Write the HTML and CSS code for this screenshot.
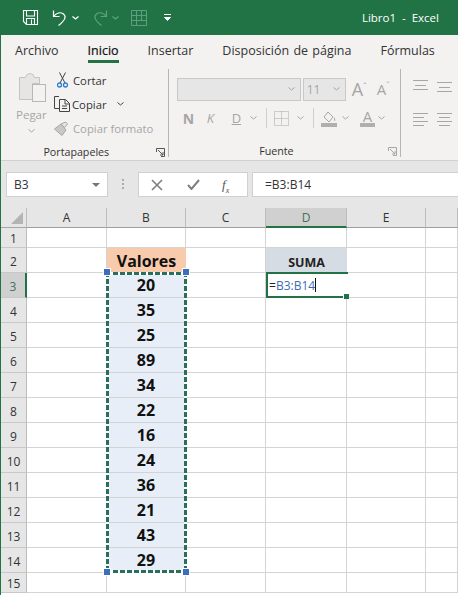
FILE: index.html
```html
<!DOCTYPE html>
<html lang="es">
<head>
<meta charset="utf-8">
<title>Libro1 - Excel</title>
<link rel="stylesheet" href="styles.css">
</head>
<body>
<div class="app">
  <header class="titlebar">
    <svg class="qa qa-save" width="17" height="17" viewBox="0 0 17 17"><path d="M1.500 1.500h14v14h-11l-3-3z M4.500 1.500v5.500h8v-5.500 M4.500 15.500v-6h8v6 M9.500 10.500v4.500" fill="none" stroke="#fff" stroke-width="1.100"/></svg>
    <svg class="qa qa-undo" width="16" height="18" viewBox="0 0 16 18"><path d="M1.500 1.500v6h6 M1.500 7.500c3-4 7-4.500 10-2.500 3 2.500 2 6-5 11.500" fill="none" stroke="#fff" stroke-width="1.200"/></svg>
    <svg class="chev" width="7" height="4" viewBox="0 0 7 4"><path d="M.5.500 3.500 3l3-2.500" fill="none" stroke="#fff" stroke-width="1.300"/></svg>
    <svg class="qa qa-redo" width="16" height="18" viewBox="0 0 16 18"><path d="M14.500 1.500v6h-6 M14.500 7.500c-3-4-7-4.500-10-2.500-3 2.500-2 6 5 11.500" fill="none" stroke="#5f9f7f" stroke-width="1.200"/></svg>
    <svg class="chev chev-dim" width="7" height="4" viewBox="0 0 7 4"><path d="M.5.500 3.500 3l3-2.500" fill="none" stroke="#5f9f7f" stroke-width="1.300"/></svg>
    <svg class="qa qa-grid" width="16" height="16" viewBox="0 0 16 16"><path d="M.5.500h15v15H.5z M.5 5.500h15 M.5 10.500h15 M5.500.500v15 M10.500.500v10" fill="none" stroke="#5f9f7f"/></svg>
    <svg class="qa qa-more" width="7" height="7" viewBox="0 0 7 7"><path d="M0 .5h7 M.5 3.500h6L3.500 6.500z" fill="#fff" stroke="#fff" stroke-width="1"/></svg>
    <span class="doc-title">Libro1&nbsp; -&nbsp; Excel</span>
  </header>

  <nav class="tabs">
    <span class="tab">Archivo</span>
    <span class="tab tab-active">Inicio</span>
    <span class="tab">Insertar</span>
    <span class="tab">Disposición de página</span>
    <span class="tab">Fórmulas</span>
  </nav>

  <section class="ribbon">
    <div class="group group-clip">
      <div class="clip-body">
        <div class="paste">
          <svg width="28" height="30" viewBox="0 0 28 30"><path d="M.5 4.500h6l1.500-3 3-1 3 1 1.500 3h5v6h-7v16H.5z" fill="#e6e5e4" stroke="#c4c3c2"/><rect x="13.500" y="11.500" width="13" height="17" fill="#f3f2f1" stroke="#b8b7b6"/></svg>
          <span class="paste-label">Pegar</span>
          <svg class="paste-chev" width="7" height="4" viewBox="0 0 7 4"><path d="M.5.500 3.500 3l3-2.500" fill="none" stroke="#a6a6a6"/></svg>
        </div>
        <div class="clip-actions">
          <div class="clip-row">
            <svg width="11" height="16" viewBox="0 0 11 16"><path d="M2.500.5 8 11 M8.500.5 3 11" fill="none" stroke="#444"/><circle cx="2.500" cy="13" r="2" fill="none" stroke="#2b7cd3" stroke-width="1.300"/><circle cx="8.500" cy="13" r="2" fill="none" stroke="#2b7cd3" stroke-width="1.300"/></svg>
            <span>Cortar</span>
          </div>
          <div class="clip-row clip-row-copy">
            <svg width="16" height="16" viewBox="0 0 16 16"><path d="M5 .5H.5v12H5 M5.500 3.500h6l4 4v8h-10z M11 3.500v4.500h4.500 M8 10h5 M8 12.500h5" fill="none" stroke="#444"/></svg>
            <span>Copiar</span>
            <svg class="copy-chev" width="7" height="4" viewBox="0 0 7 4"><path d="M.5.500 3.500 3l3-2.500" fill="none" stroke="#444"/></svg>
          </div>
          <div class="clip-row clip-row-dim">
            <svg width="16" height="15" viewBox="0 0 16 15"><path d="M.5 8 7 3l5 6-4 5.500z" fill="#c9c8c7" stroke="#a6a6a6"/><path d="M7 3l3.500 3.500 3-3.500L11.500 1z" fill="#e6e5e4" stroke="#a6a6a6"/></svg>
            <span>Copiar formato</span>
          </div>
        </div>
      </div>
      <div class="group-foot"><span class="group-name">Portapapeles</span>
        <svg class="launcher" width="9" height="9" viewBox="0 0 9 9"><path d="M.5 4V.5H8.500V8.500H5 M2 2l5 5 M7 4v3H4" fill="none" stroke="#555"/></svg>
      </div>
    </div>

    <div class="group group-font">
      <div class="font-rows">
        <div class="font-row-top">
          <div class="combo combo-font"><svg width="7" height="4" viewBox="0 0 7 4"><path d="M.5.500 3.500 3l3-2.500" fill="none" stroke="#a6a6a6"/></svg></div>
          <div class="combo combo-size"><span>11</span><svg width="7" height="4" viewBox="0 0 7 4"><path d="M.5.500 3.500 3l3-2.500" fill="none" stroke="#a6a6a6"/></svg></div>
          <span class="grow-a">A<sup>ˆ</sup></span>
          <span class="shrink-a">A<sup>ˇ</sup></span>
        </div>
        <div class="font-row-bot">
          <span class="fmt fmt-n">N</span>
          <span class="fmt fmt-k">K</span>
          <span class="fmt fmt-d">D</span>
          <svg class="dimchev" width="7" height="4" viewBox="0 0 7 4"><path d="M.5.500 3.500 3l3-2.500" fill="none" stroke="#a6a6a6"/></svg>
          <span class="vsep"></span>
          <svg class="borders" width="15" height="15" viewBox="0 0 15 15"><path d="M.5.500h14v14H.5z M7.500.5v14 M.5 7.500h14" fill="none" stroke="#a6a6a6" stroke-dasharray="1 1"/></svg>
          <svg class="dimchev" width="7" height="4" viewBox="0 0 7 4"><path d="M.5.500 3.500 3l3-2.500" fill="none" stroke="#a6a6a6"/></svg>
          <span class="vsep"></span>
          <svg class="fill" width="16" height="17" viewBox="0 0 16 17"><path d="M3 7l4-5 5 5-4 5z" fill="#f3f2f1" stroke="#a6a6a6"/><path d="M13 7c1 2 2 3 1 4-1 0-1-2-1-4z" fill="#a6a6a6"/><rect y="13" width="16" height="4" fill="#b0afae"/></svg>
          <svg class="dimchev" width="7" height="4" viewBox="0 0 7 4"><path d="M.5.500 3.500 3l3-2.500" fill="none" stroke="#a6a6a6"/></svg>
          <span class="color-a">A</span>
          <svg class="dimchev" width="7" height="4" viewBox="0 0 7 4"><path d="M.5.500 3.500 3l3-2.500" fill="none" stroke="#a6a6a6"/></svg>
        </div>
      </div>
      <div class="group-foot"><span class="group-name">Fuente</span>
        <svg class="launcher" width="9" height="9" viewBox="0 0 9 9"><path d="M.5 4V.5H8.500V8.500H5 M2 2l5 5 M7 4v3H4" fill="none" stroke="#a6a6a6"/></svg>
      </div>
    </div>

    <div class="group-align">
      <svg width="15" height="11" viewBox="0 0 15 11"><path d="M0 .5h15 M2 5.500h11 M0 9.500h15" stroke="#a6a6a6" fill="none"/></svg>
      <svg class="align-low" width="15" height="11" viewBox="0 0 15 11"><path d="M0 .5h15 M2 5.500h11 M0 9.500h15" stroke="#a6a6a6" fill="none"/></svg>
      <svg width="15" height="13" viewBox="0 0 15 13"><path d="M0 .5h15 M0 4.500h11 M0 8.500h15 M0 12.500h11" stroke="#a6a6a6" fill="none"/></svg>
      <svg width="15" height="13" viewBox="0 0 15 13"><path d="M0 .5h15 M2 4.500h11 M0 8.500h15 M2 12.500h11" stroke="#a6a6a6" fill="none"/></svg>
    </div>
  </section>

  <section class="formula-zone">
    <div class="namebox"><span>B3</span><span class="tri"></span></div>
    <span class="dots"></span>
    <div class="fx-buttons">
      <svg width="12" height="12" viewBox="0 0 12 12"><path d="M1 1l10 10 M11 1 1 11" stroke="#7f7f7f" stroke-width="1.600" fill="none"/></svg>
      <svg width="13" height="11" viewBox="0 0 13 11"><path d="M1 6l3.500 4L12 1" stroke="#7f7f7f" stroke-width="2" fill="none"/></svg>
      <span class="fx">f<sub>x</sub></span>
    </div>
    <div class="formula-input">=B3:B14</div>
  </section>

  <section class="sheet">
    <div class="grid">
      <div class="corner"><span class="corner-tri"></span></div>
      <div class="ch">A</div><div class="ch">B</div><div class="ch">C</div><div class="ch ch-on">D</div><div class="ch">E</div><div class="ch"></div>

      <div class="rh r-short">1</div><div class="c"></div><div class="c"></div><div class="c"></div><div class="c"></div><div class="c"></div><div class="c"></div>
      <div class="rh">2</div><div class="c"></div><div class="c c-head">Valores</div><div class="c"></div><div class="c c-suma">SUMA</div><div class="c"></div><div class="c"></div>
      <div class="rh rh-on">3</div><div class="c"></div><div class="c c-val">20</div><div class="c"></div><div class="c c-edit">=<span class="ref">B3:B14</span><span class="caret"></span><span class="fill-handle"></span></div><div class="c"></div><div class="c"></div>
      <div class="rh">4</div><div class="c"></div><div class="c c-val">35</div><div class="c"></div><div class="c"></div><div class="c"></div><div class="c"></div>
      <div class="rh">5</div><div class="c"></div><div class="c c-val">25</div><div class="c"></div><div class="c"></div><div class="c"></div><div class="c"></div>
      <div class="rh">6</div><div class="c"></div><div class="c c-val">89</div><div class="c"></div><div class="c"></div><div class="c"></div><div class="c"></div>
      <div class="rh">7</div><div class="c"></div><div class="c c-val">34</div><div class="c"></div><div class="c"></div><div class="c"></div><div class="c"></div>
      <div class="rh">8</div><div class="c"></div><div class="c c-val">22</div><div class="c"></div><div class="c"></div><div class="c"></div><div class="c"></div>
      <div class="rh">9</div><div class="c"></div><div class="c c-val">16</div><div class="c"></div><div class="c"></div><div class="c"></div><div class="c"></div>
      <div class="rh">10</div><div class="c"></div><div class="c c-val">24</div><div class="c"></div><div class="c"></div><div class="c"></div><div class="c"></div>
      <div class="rh">11</div><div class="c"></div><div class="c c-val">36</div><div class="c"></div><div class="c"></div><div class="c"></div><div class="c"></div>
      <div class="rh">12</div><div class="c"></div><div class="c c-val">21</div><div class="c"></div><div class="c"></div><div class="c"></div><div class="c"></div>
      <div class="rh">13</div><div class="c"></div><div class="c c-val">43</div><div class="c"></div><div class="c"></div><div class="c"></div><div class="c"></div>
      <div class="rh">14</div><div class="c"></div><div class="c c-val">29</div><div class="c"></div><div class="c"></div><div class="c"></div><div class="c"></div>
      <div class="rh r-short">15</div><div class="c"></div><div class="c"></div><div class="c"></div><div class="c"></div><div class="c"></div><div class="c"></div>
    </div>
    <div class="ants">
      <span class="hd hd-tl"></span><span class="hd hd-tr"></span><span class="hd hd-bl"></span><span class="hd hd-br"></span>
    </div>
  </section>
</div>
</body>
</html>
```

FILE: styles.css
```css
* { box-sizing: border-box; }
html, body { margin: 0; padding: 0; }
body { width: 458px; height: 595px; overflow: hidden; background: #fff; font-family: "Open Sans", "Noto Sans", sans-serif; color: #333; }
.app { width: 458px; height: 595px; display: flex; flex-direction: column; border-left: 1px solid #217346; overflow: hidden; }

/* Title bar */
.titlebar { height: 35px; flex: none; background: #217346; display: flex; align-items: center; padding-left: 22px; margin-left: -1px; }
.titlebar svg { display: block; flex: none; }
.qa-save { margin-right: 13px; }
.qa-undo { margin-right: 4px; }
.titlebar .chev { margin-right: 13px; }
.titlebar .chev-dim { margin-left: 4px; margin-right: 12px; }
.qa-grid { margin-right: 17px; }
.doc-title { margin-left: auto; margin-right: 19px; color: #fff; font-size: 11.500px; }

/* Tabs */
.tabs { height: 34px; flex: none; background: #f3f2f1; display: flex; align-items: flex-start; padding-top: 7px; padding-left: 14px; font-size: 12.500px; word-spacing: 1px; color: #333; }
.tab { margin-right: 29px; position: relative; white-space: nowrap; }
.tab-active { color: #111; -webkit-text-stroke: .2px #111; }
.tab-active::after { content: ""; position: absolute; left: 0; right: 0; bottom: -4px; height: 3px; background: #217346; }

/* Ribbon */
.ribbon { height: 92px; flex: none; background: #f3f2f1; border-bottom: 1px solid #d2d0ce; display: flex; }
.group { display: flex; flex-direction: column; border-right: 1px solid #b6b5b4; margin-bottom: 3px; }
.group-clip { width: 168px; }
.group-font { width: 233px; }
.clip-body { flex: 1; display: flex; padding-left: 18px; padding-top: 4px; }
.paste { width: 36px; margin-left: -4px; display: flex; flex-direction: column; align-items: flex-start; color: #a6a6a6; }
.paste svg { margin-left: 4px; }
.paste-label { margin-top: 5px; line-height: 14px; font-size: 11.500px; margin-left: 1px; }
.paste .paste-chev { margin: 7px 0 0 13px; }
.clip-actions { display: flex; flex-direction: column; padding-left: 3px; margin-top: -5px; }
.clip-row { height: 24px; flex: none; display: flex; align-items: center; font-size: 11.300px; color: #333; gap: 5px; padding-left: 3px; }
.clip-row-copy { gap: 2px; padding-left: 0; }
.clip-row-dim { color: #a6a6a6; gap: 3px; padding-left: 0; }
.copy-chev { margin-left: 8px; }
.group-foot { height: 18px; flex: none; display: flex; align-items: center; justify-content: center; position: relative; font-size: 10.700px; color: #333; padding-right: 16px; padding-top: 6px; }
.launcher { position: absolute; right: 3px; bottom: 1px; }
.font-rows { flex: 1; padding: 8px 0 0 8px; }
.font-row-top { display: flex; align-items: center; height: 24px; }
.combo { height: 23px; background: #e6e6e6; border: 1px solid #c8c8c8; display: flex; align-items: center; justify-content: flex-end; padding-right: 5px; }
.combo-font { width: 124px; margin-right: 2px; }
.combo-size { width: 43px; justify-content: space-between; padding-left: 3px; margin-right: 6px; color: #a6a6a6; font-size: 12px; }
.grow-a, .shrink-a { color: #a6a6a6; line-height: 20px; }
.grow-a { margin-right: 10px; font-size: 18px; }
.shrink-a { font-size: 15px; }
.grow-a sup, .shrink-a sup { font-size: 9px; vertical-align: 6px; line-height: 0; }
.font-row-bot { display: flex; align-items: center; height: 24px; margin-top: 5px; color: #a6a6a6; padding-left: 6px; }
.fmt { font-size: 13px; }
.fmt-n { font-weight: 700; font-size: 14px; width: 24px; }
.fmt-k { font-style: italic; width: 25px; }
.fmt-d { text-decoration: underline; width: 16px; }
.dimchev { flex: none; margin: 0 9px 0 2px; }
.vsep { width: 1px; height: 20px; background: #d2d0ce; margin: 0 7px 0 0; }
.borders { margin-right: 6px; }
.fill { margin: 0 3px 0 0; }
.color-a { font-size: 15px; line-height: 13px; border-bottom: 4px solid #b0afae; padding: 0 3px; margin: 0 1px 0 2px; }
.group-align { width: 57px; padding: 11px 0 0 12px; display: grid; grid-template-columns: 15px 15px; column-gap: 9px; row-gap: 20px; align-content: start; }
.align-low { margin-top: 2px; }

/* Formula bar */
.formula-zone { height: 47px; flex: none; background: #e6e6e6; display: flex; align-items: flex-start; padding-top: 11px; padding-left: 5px; }
.namebox { width: 102px; height: 25px; background: #fff; border: 1px solid #d0d0d0; display: flex; align-items: center; justify-content: space-between; padding: 0 7px 0 7px; font-size: 12px; color: #333; }
.tri { width: 0; height: 0; border-left: 4px solid transparent; border-right: 4px solid transparent; border-top: 4px solid #777; }
.dots { width: 2px; height: 10px; margin: 7px 14px 0 14px; background: repeating-linear-gradient(#aaa 0 2px, transparent 2px 4px); }
.fx-buttons { width: 110px; height: 25px; background: #fff; border: 1px solid #d0d0d0; display: flex; align-items: center; padding-left: 12px; gap: 24px; }
.fx { font-family: "Liberation Serif", serif; font-style: italic; font-size: 13px; color: #555; margin-left: -2px; }
.fx sub { font-size: 8px; line-height: 0; }
.formula-input { flex: 1; height: 25px; background: #fff; border: 1px solid #d0d0d0; border-right: none; margin-left: 4px; display: flex; align-items: center; padding-left: 12px; font-size: 12px; color: #333; }

/* Sheet */
.sheet { position: relative; flex: 1; background: #fff; }
.grid { display: grid; grid-template-columns: 26px 80px 79px 80px 81px 79px 1fr; grid-template-rows: 20px 20px repeat(13, 25px) 20px; }
.corner { background: #e6e6e6; border-right: 1px solid #bdbdbd; border-bottom: 1px solid #a6a6a6; position: relative; }
.corner-tri { position: absolute; right: 3px; bottom: 3px; width: 0; height: 0; border-left: 12px solid transparent; border-bottom: 12px solid #b4b4b4; }
.ch { background: #e6e6e6; border-right: 1px solid #bdbdbd; border-bottom: 1px solid #9f9f9f; display: flex; align-items: center; justify-content: center; font-size: 12px; color: #333; }
.ch-on { background: #d0d0d0; border-bottom: 2px solid #217346; color: #44715a; }
.rh { background: #e6e6e6; border-right: 1px solid #bdbdbd; border-bottom: 1px solid #c8c8c8; display: flex; align-items: center; justify-content: center; font-size: 12px; color: #333; padding-top: 2px; }
.rh-on { background: #d0d0d0; border-right: 2px solid #217346; color: #44715a; }
.c { border-right: 1px solid #d4d4d4; border-bottom: 1px solid #d4d4d4; position: relative; }
.c-head { background: #f8cbad; display: flex; align-items: center; justify-content: center; font-weight: 700; font-size: 16px; color: #111; border: none; }
.c-suma { background: #d6dce4; display: flex; align-items: center; justify-content: center; font-weight: 700; font-size: 12.500px; color: #222; border: none; padding-top: 3px; }
.c-val { background: #e7eef8; display: flex; align-items: center; justify-content: center; font-weight: 700; font-size: 16px; color: #111; }
.c-edit { border: 2px solid #217346; border-right: none; margin: -1px -1px 0 0; display: flex; align-items: center; padding-left: 1px; font-size: 12px; color: #222; z-index: 2; background: #fff; }
.ref { color: #3e6cb3; }
.caret { width: 1px; height: 14px; background: #111; }
.fill-handle { position: absolute; right: -1px; bottom: -3px; width: 6px; height: 5px; background: #217346; border-left: 1px solid #fff; }
.ants { position: absolute; left: 105px; top: 64px; width: 81px; height: 301px; pointer-events: none;
  background:
    repeating-linear-gradient(90deg, #2a6e5c 0 5px, #fff 5px 7px) top left / 100% 3px no-repeat,
    repeating-linear-gradient(90deg, #2a6e5c 0 5px, #fff 5px 7px) bottom left / 100% 3px no-repeat,
    repeating-linear-gradient(#2a6e5c 0 5px, #fff 5px 7px) top left / 3px 100% no-repeat,
    repeating-linear-gradient(#2a6e5c 0 5px, #fff 5px 7px) top right / 3px 100% no-repeat;
}
.hd { position: absolute; width: 6px; height: 6px; background: #3a6ec1; border: 1px solid #fff; box-sizing: content-box; }
.hd-tl { left: -3px; top: -4px; }
.hd-tr { right: -3px; top: -4px; }
.hd-bl { left: -3px; bottom: -3px; }
.hd-br { right: -3px; bottom: -3px; }
```
